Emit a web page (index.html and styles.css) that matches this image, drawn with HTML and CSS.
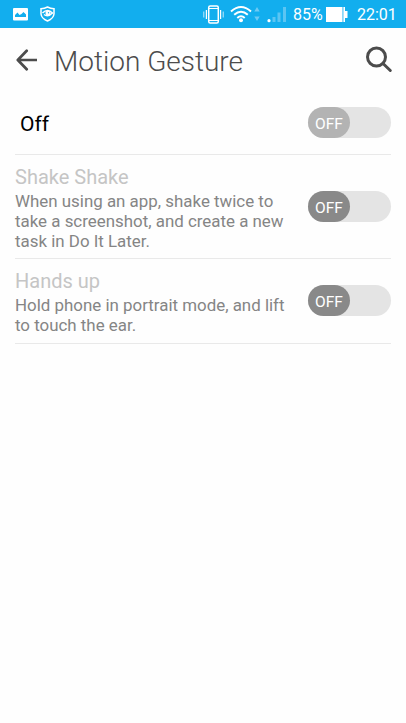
FILE: index.html
```html
<!DOCTYPE html>
<html lang="en">
<head>
<meta charset="utf-8">
<title>Motion Gesture</title>
<link rel="stylesheet" href="styles.css">
</head>
<body>
<div class="status">
  <svg class="photo" width="15" height="13" viewBox="0 0 15 13"><path fill="#fff" fill-rule="evenodd" d="M1 0h13a1 1 0 0 1 1 1v10.500a1 1 0 0 1-1 1H1a1 1 0 0 1-1-1V1a1 1 0 0 1 1-1zM2 9h11V6.500L10.500 4 8.500 6 6.500 7 4.500 4.500 2 7z"/></svg>
  <svg class="shield" width="15" height="16" viewBox="0 0 15 16"><path fill="none" stroke="#fff" stroke-width="1.500" d="M7.500 1Q4.500 2.700 1 2.800V8q.5 4.500 6.500 7 6-2.500 6.500-7V2.800Q10.500 2.700 7.500 1z"/><path fill="none" stroke="#fff" stroke-width="1.500" d="M2.500 7Q7.500 2 12.500 7 8 11.500 4 8.500"/><circle cx="8" cy="7" r="2.500" fill="#fff"/><circle cx="8.500" cy="6.800" r=".7" fill="#12aeee"/></svg>
  <span class="space"></span>
  <svg class="vibrate" width="21" height="19" viewBox="0 0 21 19"><rect x="5.700" y="1" width="9.600" height="17" rx="1.500" fill="none" stroke="#fff" stroke-width="1.500"/><path fill="none" stroke="#fff" stroke-width="1.200" d="M6 3.500h9M6 15.500h9M3.400 5v9M17.600 5v9"/><path stroke="#fff" stroke-opacity=".75" stroke-width="1" d="M.8 6.500v6M20.200 6.500v6"/></svg>
  <svg class="wifi" width="22" height="18" viewBox="0 0 22 18"><path fill="none" stroke="#fff" stroke-width="2" d="M1 6.500Q11-2.500 21 6.500M4.200 9.800Q11 3.600 17.800 9.800M7.300 13Q11 9.600 14.700 13"/><circle cx="11" cy="15.200" r="2" fill="#fff"/></svg>
  <svg class="traffic" width="6" height="14" viewBox="0 0 6 14"><path fill="#6dcaf4" d="M3 0l2.700 4.500H.3zM3 14L.3 9.500h5.400z"/></svg>
  <svg class="signal" width="20" height="17" viewBox="0 0 20 17"><circle cx="2" cy="14.700" r="1.600" fill="#fff"/><path fill="#5bc5f3" d="M5.500 11h3v5h-3zM10.500 6.500h3V16h-3zM16 1h3v15h-3z"/></svg>
  <span class="percent">85%</span>
  <svg class="battery" width="22" height="15" viewBox="0 0 22 15"><path fill="#fff" d="M0 0h16v15H0zM19 4h2.500v7H19z"/><path fill="#8bd6f8" d="M16 0h1.500v15H16z"/><path fill="#fff" d="M17.500 0H19v15h-1.500z"/></svg>
  <span class="clock">22:01</span>
</div>
<header class="header">
  <svg class="back" width="21" height="22" viewBox="0 0 21 22"><path fill="none" stroke="#4c4c4c" stroke-width="2.700" stroke-linecap="round" stroke-linejoin="round" d="M10.700 1.700L1.800 11l8.900 9.300M2 11h18.500"/></svg>
  <h1 class="title">Motion Gesture</h1>
  <svg class="search" width="28" height="28" viewBox="0 0 28 28"><circle cx="11.500" cy="11" r="9" fill="none" stroke="#4c4c4c" stroke-width="3"/><path stroke="#4c4c4c" stroke-width="3" stroke-linecap="round" d="M18 17.500l7.300 7"/></svg>
</header>
<main class="list">
  <section class="row row-main"><div class="text"><h2 class="label">Off</h2></div><div class="toggle faded"><span class="thumb">OFF</span></div></section>
  <section class="row row-shake"><div class="text"><h2 class="name">Shake Shake</h2><p class="desc">When using an app, shake twice to<br>take a screenshot, and create a new<br>task in Do It Later.</p></div><div class="toggle"><span class="thumb">OFF</span></div></section>
  <section class="row row-hands"><div class="text"><h2 class="name">Hands up</h2><p class="desc">Hold phone in portrait mode, and lift<br>to touch the ear.</p></div><div class="toggle"><span class="thumb">OFF</span></div></section>
</main>
</body>
</html>
```
FILE: styles.css
```css
* { box-sizing: border-box; }
body { margin: 0; height: 723px; background: #fefefe; font-family: Roboto, "Liberation Sans", sans-serif; overflow: hidden; }
h1, h2, p { margin: 0; font-weight: 400; }
svg { display: block; flex: none; }
.status { display: flex; align-items: center; height: 28px; padding: 0 9px 0 13px; background: #12aeee; color: #fff; white-space: nowrap; }
.shield { margin-left: 12px; }
.space { flex: 1; }
.wifi { margin-left: 6px; }
.traffic { margin-left: 2px; }
.signal { margin-left: 7px; }
.percent { width: 30px; margin-left: 6px; font-size: 16px; line-height: 28px; padding-top: 2px; }
.battery { margin-left: 3px; }
.clock { width: 40px; margin-left: 9px; font-size: 16px; line-height: 28px; padding-top: 2px; }
.header { display: flex; align-items: center; height: 64px; padding: 0 13px 0 16px; }
.title { flex: 1; margin-left: 17px; padding-top: 3px; font-size: 28px; font-weight: 300; line-height: 34px; color: #4c4c4c; white-space: nowrap; }
.list { margin: 0 15px; }
.row { display: flex; justify-content: space-between; border-bottom: 1px solid #e9e9e9; }
.row-main { height: 63px; padding-top: 15px; }
.row-shake { height: 104px; padding-top: 9px; }
.row-hands { height: 85px; padding-top: 9px; }
.text { white-space: nowrap; }
.label { padding: 4px 0 0 5px; font-size: 21px; line-height: 26px; color: #000; }
.name { font-size: 20px; line-height: 26px; color: #c5c5c5; }
.desc { margin-top: 1px; font-size: 16.9px; line-height: 20px; color: #858585; }
.toggle { flex: none; width: 83px; height: 31px; border-radius: 16px; background: #e4e4e4; }
.row-shake .toggle { margin-top: 27px; }
.row-hands .toggle { margin-top: 17px; }
.thumb { display: block; width: 42px; height: 31px; padding-top: 2px; border-radius: 16px; background: #898989; color: #fff; font-size: 15.5px; line-height: 30px; text-align: center; }
.faded .thumb { background: #b3b3b3; }
```
